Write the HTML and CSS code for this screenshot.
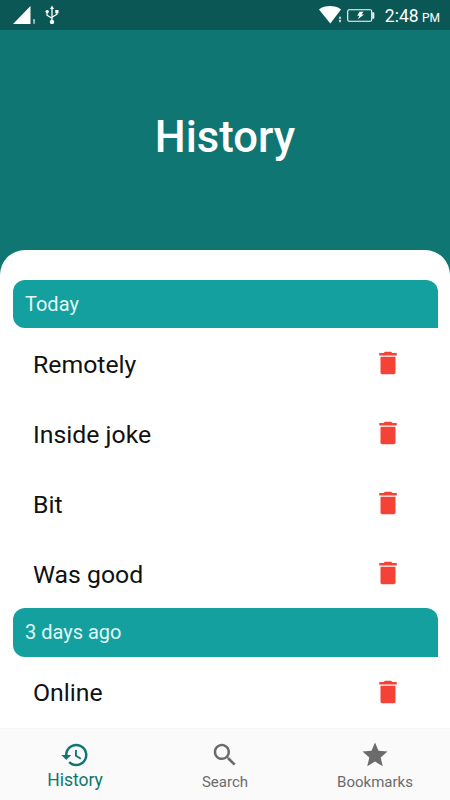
FILE: index.html
```html
<!DOCTYPE html>
<html lang="en">
<head>
    <meta charset="UTF-8">
    <meta name="viewport" content="width=device-width, initial-scale=1.0">
    <title>History</title>
    <link rel="stylesheet" href="styles.css">
</head>
<body>
    <svg class="sprite">
        <symbol id="trash" viewBox="0 0 24 24">
            <path d="M6 19.6c0 .8.6 1.4 1.4 1.4h9.2c.8 0 1.4-.6 1.4-1.4V7H6v12.600zM19 4h-3.500l-1-1h-5l-1 1H5v2h14V4z"/>
        </symbol>
    </svg>

    <div class="status-bar">
        <div class="status-left">
            <svg class="signal" width="24" height="20" viewBox="0 0 24 20">
                <path d="M0 19L17.5 1v18z"/>
                <path d="M20 14.8l1.6-.8v4.8h-1.100v-3.600H20z"/>
            </svg>
            <svg class="usb" width="14" height="20" viewBox="0 0 14 20">
                <path d="M7 2v14M2 7v3.2l5 3M12 6v3.2l-5 3" fill="none" stroke="#fff" stroke-width="1.3"/>
                <path d="M7 .5l2 3.6H5zM10.3 5h3.2v3.2h-3.2z"/>
                <circle cx="2.2" cy="6.6" r="1.7"/>
                <circle cx="7" cy="16.9" r="2.2"/>
            </svg>
        </div>
        <div class="status-right">
            <svg class="wifi" width="24" height="20" viewBox="0 0 24 20">
                <path d="M0 4.4C6.2 0 15.8 0 22 4.4L11.3 18.5z"/>
                <path d="M18.6 10.6h5V20h-5z" fill="#0b5755"/>
                <path d="M20 13.4l1-1.9 1 1.9zM20 15.2h2l-1 2.2z" stroke="#fff" stroke-width=".4"/>
            </svg>
            <svg class="battery" width="28" height="13" viewBox="0 0 28 13">
                <rect x=".7" y=".7" width="24" height="11.6" rx="1.5" fill="none" stroke="#fff" stroke-width="1.1"/>
                <path d="M25.3 3.2h1.2q.8 0 .8 .8v5q0 .8-.8.8h-1.2z"/>
                <path d="M12.5 2.8h4l-2 2.6h2.5l-6.2 4.8 1.7-3.4h-2.3z"/>
            </svg>
            <span class="time">2:48 <small>PM</small></span>
        </div>
    </div>

    <header class="header">
        <h1>History</h1>
    </header>

    <main class="sheet">
        <h2 class="day">Today</h2>
        <ul>
            <li>Remotely <svg class="trash"><use href="#trash"/></svg></li>
            <li>Inside joke <svg class="trash"><use href="#trash"/></svg></li>
            <li>Bit <svg class="trash"><use href="#trash"/></svg></li>
            <li>Was good <svg class="trash"><use href="#trash"/></svg></li>
        </ul>
        <h2 class="day">3 days ago</h2>
        <ul>
            <li>Online <svg class="trash"><use href="#trash"/></svg></li>
        </ul>
    </main>

    <nav class="tabs">
        <a class="tab active">
            <svg viewBox="0 0 24 24"><path d="M13 3c-4.97 0-9 4.03-9 9H1l3.89 3.89.07.14L9 12H6c0-3.87 3.13-7 7-7s7 3.13 7 7-3.13 7-7 7c-1.93 0-3.68-.79-4.94-2.06l-1.42 1.42C8.27 19.99 10.51 21 13 21c4.97 0 9-4.03 9-9s-4.03-9-9-9zm-1 5v5l4.28 2.54.72-1.21-3.5-2.08V8H12z"/></svg>
            <span>History</span>
        </a>
        <a class="tab">
            <svg viewBox="0 0 24 24"><path d="M15.5 14h-.79l-.28-.27C15.41 12.59 16 11.11 16 9.5 16 5.91 13.09 3 9.5 3S3 5.91 3 9.5 5.91 16 9.5 16c1.61 0 3.09-.59 4.23-1.57l.27.28v.79l5 4.99L20.49 19l-4.99-5zm-6 0C7.01 14 5 11.99 5 9.5S7.01 5 9.5 5 14 7.01 14 9.5 11.99 14 9.5 14z"/></svg>
            <span>Search</span>
        </a>
        <a class="tab">
            <svg viewBox="0 0 24 24"><path d="M12 17.27L18.18 21l-1.64-7.03L22 9.24l-7.19-.61L12 2 9.19 8.63 2 9.24l5.46 4.73L5.82 21z"/></svg>
            <span>Bookmarks</span>
        </a>
    </nav>
</body>
</html>
```
FILE: styles.css
```css
* {
    margin: 0;
    padding: 0;
    box-sizing: border-box;
}

body {
    font-family: Roboto, "Liberation Sans", sans-serif;
    background: #0f7673;
    height: 100vh;
    display: flex;
    flex-direction: column;
    overflow: hidden;
}

.sprite {
    display: none;
}

.status-bar {
    height: 30px;
    flex-shrink: 0;
    background: #0b5755;
    color: #fff;
    fill: #fff;
    display: flex;
    justify-content: space-between;
    padding: 0 10px 0 13px;
}

.status-left,
.status-right {
    display: flex;
    align-items: center;
}

.usb {
    margin-left: 8px;
}

.battery {
    margin-left: 4px;
}

.time {
    margin-left: 10px;
    padding-top: 3px;
    font-size: 17.5px;
    line-height: 28px;
    white-space: nowrap;
}

.time small {
    margin-left: -1px;
    font-size: 12px;
}

.header {
    height: 219.5px;
    flex-shrink: 0;
    display: flex;
    align-items: center;
    justify-content: center;
    padding-bottom: 4px;
    color: #fff;
}

.header h1 {
    font-size: 43.6px;
    font-weight: 500;
}

.sheet {
    flex: 1;
    min-height: 0;
    background: #fff;
    border-radius: 25px 25px 0 0;
    padding: 30px 12.5px 0;
    overflow: hidden;
}

.day {
    height: 48.7px;
    line-height: 49.6px;
    padding-left: 12.5px;
    background: #15a0a0;
    border-radius: 12px 12px 0 12px;
    color: #e0f7f6;
    font-size: 20px;
    font-weight: 400;
}

ul {
    list-style: none;
}

li {
    height: 70px;
    display: flex;
    align-items: center;
    justify-content: space-between;
    padding: 2px 35px 0 20.5px;
    font-size: 24.8px;
    color: #111;
}

.trash {
    width: 30px;
    height: 30px;
    margin-bottom: 2px;
    fill: #f44336;
}

.tabs {
    height: 72px;
    flex-shrink: 0;
    display: flex;
    background: #fafafa;
    border-top: 1px solid #f5f5f5;
}

.tab {
    flex: 1;
    display: flex;
    flex-direction: column;
    align-items: center;
    padding-top: 11px;
    font-size: 15px;
    line-height: 24px;
    color: #6b6b6b;
    fill: #6b6b6b;
}

.tab svg {
    width: 30px;
    height: 30px;
}

.tab.active {
    color: #0f7673;
    fill: #0f7673;
    font-size: 17.5px;
    line-height: 21px;
}
```
